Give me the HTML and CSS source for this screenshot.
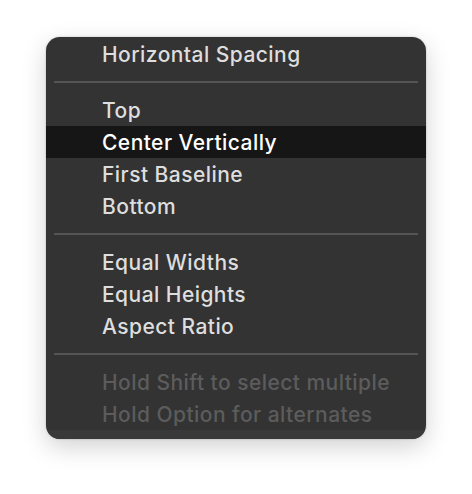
FILE: index.html
```html
<!DOCTYPE html>
<html>
<head>
<meta charset="utf-8">
<link rel="stylesheet" href="styles.css">
</head>
<body>
<div class="menu">
  <div class="item">Horizontal Spacing</div>
  <div class="sep"></div>
  <div class="item">Top</div>
  <div class="item active">Center Vertically</div>
  <div class="item">First Baseline</div>
  <div class="item">Bottom</div>
  <div class="sep"></div>
  <div class="item">Equal Widths</div>
  <div class="item">Equal Heights</div>
  <div class="item">Aspect Ratio</div>
  <div class="sep"></div>
  <div class="item disabled">Hold Shift to select multiple</div>
  <div class="item disabled">Hold Option for alternates</div>
  <div class="foot"></div>
</div>
</body>
</html>
```
FILE: styles.css
```css
html, body {
  margin: 0;
  padding: 0;
  background: #ffffff;
}
body {
  width: 472px;
  height: 494px;
  padding: 37px 0 0 46px;
  box-sizing: border-box;
  font-family: Inter, "Liberation Sans", sans-serif;
}
.menu {
  width: 380px;
  height: 402px;
  background: #333333;
  border-radius: 14px;
  overflow: hidden;
  box-shadow: 0 8px 24px rgba(0,0,0,0.18), 0 0 2px rgba(0,0,0,0.25);
  display: flex;
  flex-direction: column;
  padding-top: 1px;
  box-sizing: border-box;
}
.item {
  height: 32px;
  line-height: 34px;
  padding-left: 56px;
  font-size: 21px;
  font-weight: 500;
  letter-spacing: 0.45px;
  color: #dedede;
  white-space: nowrap;
}
.item.active {
  background: #161616;
  color: #ffffff;
}
.item.disabled {
  color: #5c5c5c;
}
.sep {
  height: 24px;
  display: flex;
  align-items: center;
  padding: 0 8px;
}
.sep::before {
  content: "";
  flex: 1;
  height: 2px;
  background: #555555;
}
.foot {
  flex: 1;
  background: #393939;
}
```
